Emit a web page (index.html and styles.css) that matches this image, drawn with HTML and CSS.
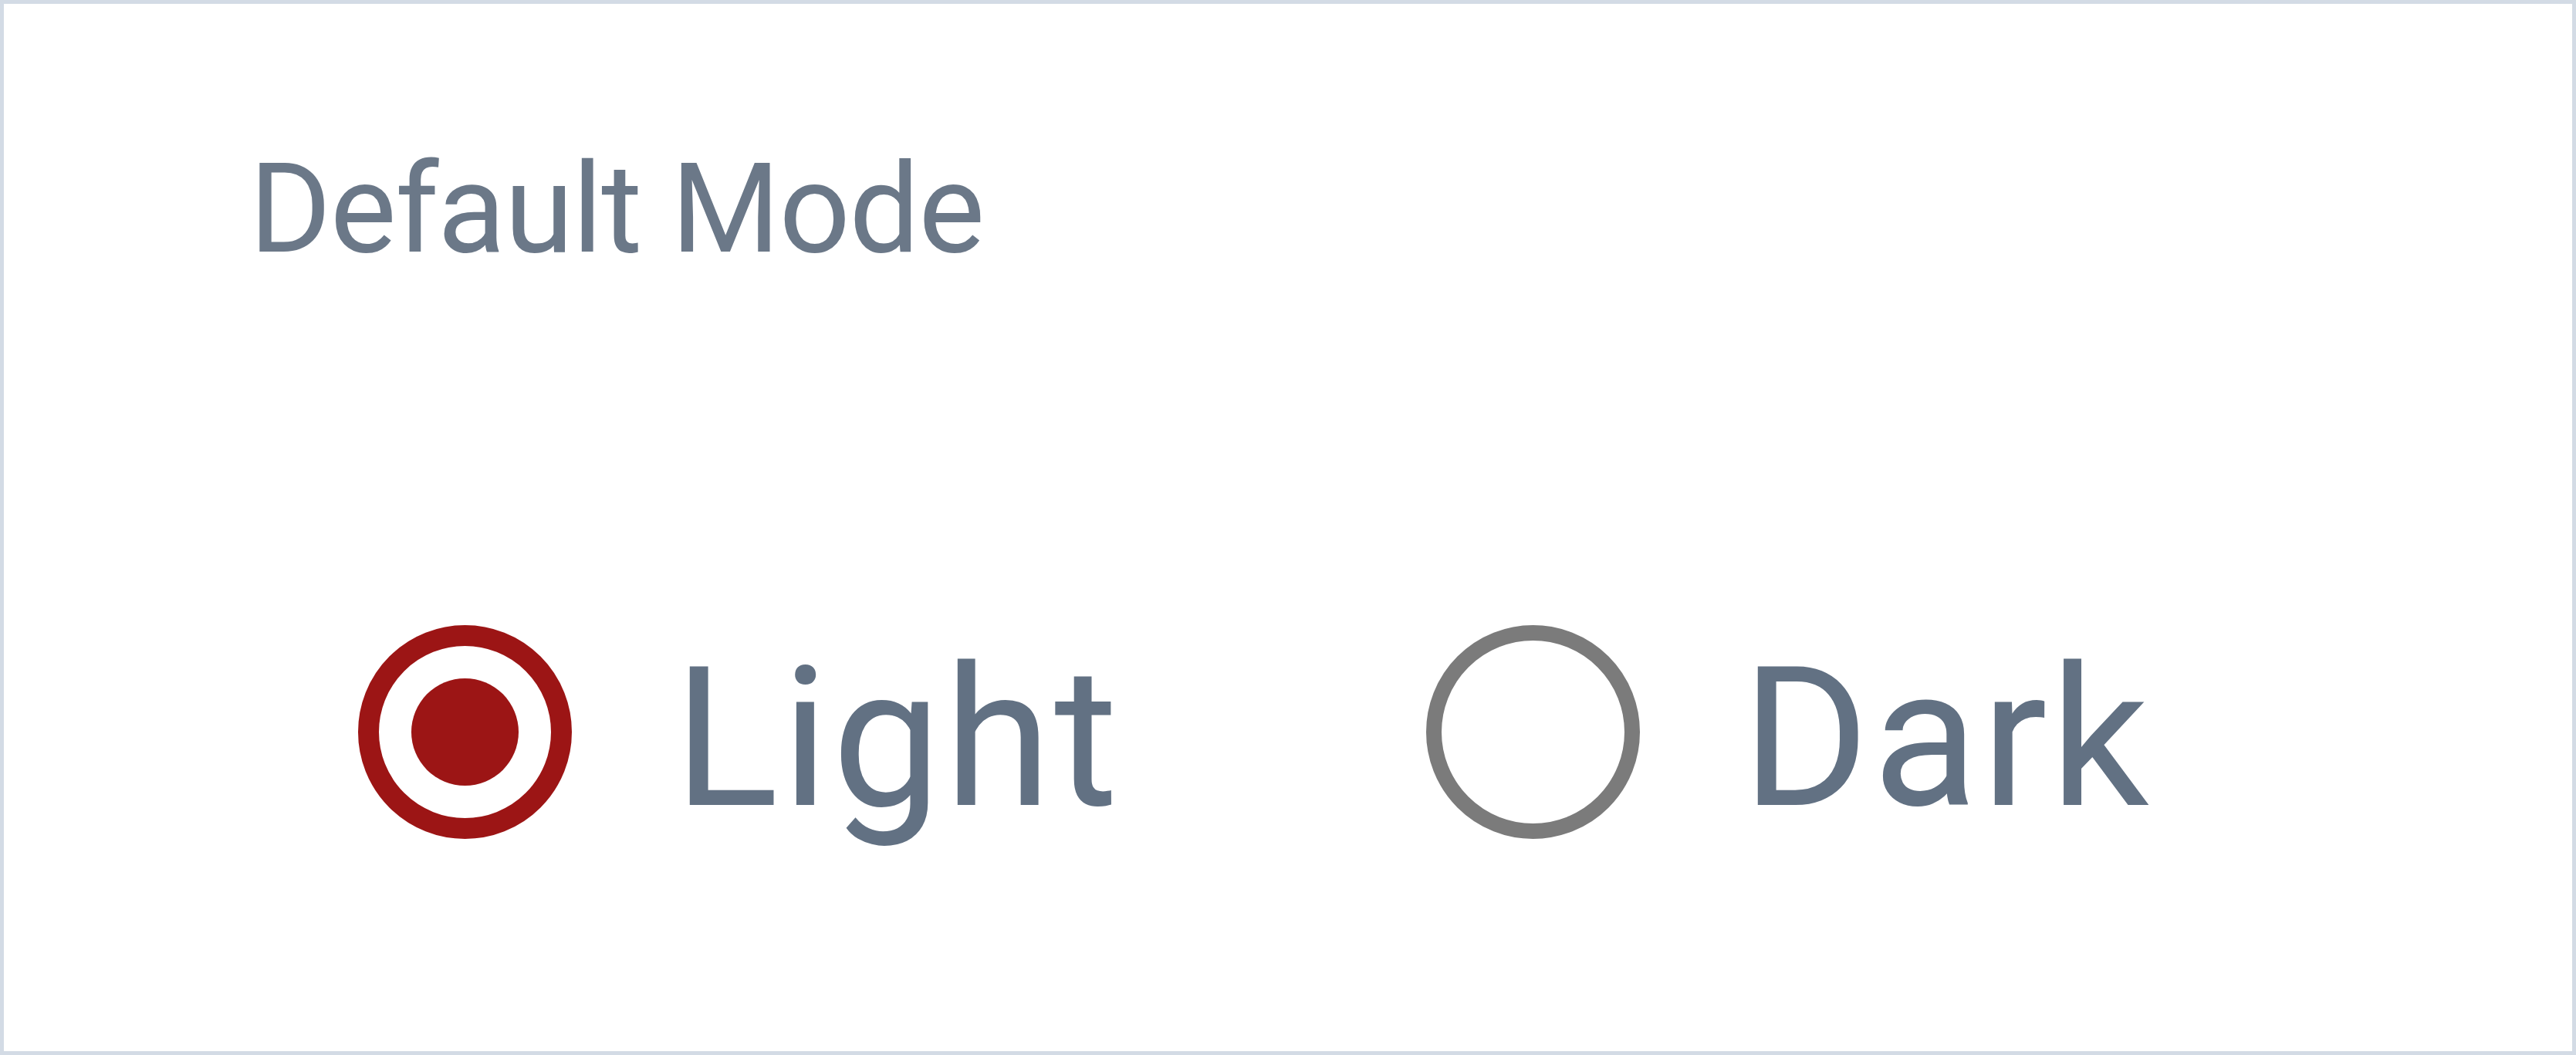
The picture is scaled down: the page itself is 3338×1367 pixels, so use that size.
FILE: index.html
```html
<!DOCTYPE html>
<html lang="en">
<head>
<meta charset="utf-8">
<title>Default Mode</title>
<link rel="stylesheet" href="styles.css">
</head>
<body>
<div class="panel">
  <div class="label">Default Mode</div>
  <div class="options">
    <label class="option option-light">
      <span class="radio radio-checked"><span class="dot"></span></span>
      <span class="option-text">Light</span>
    </label>
    <label class="option option-dark">
      <span class="radio radio-unchecked"></span>
      <span class="option-text">Dark</span>
    </label>
  </div>
</div>
</body>
</html>
```
FILE: styles.css
```css
html, body {
  margin: 0;
  padding: 0;
  background: #ffffff;
}
.panel {
  box-sizing: border-box;
  width: 3338px;
  height: 1367px;
  border: 5px solid #d3dbe5;
  background: #ffffff;
  padding: 185px 0 0 318px;
  font-family: Roboto, "Open Sans", sans-serif;
  color: #64748b;
}
.label {
  font-size: 162px;
  line-height: 1;
  height: 162px;
  color: #6b7888;
  letter-spacing: -1.5px;
}
.options {
  display: flex;
  align-items: center;
  margin-top: 458px;
  margin-left: 141px;
}
.option {
  display: flex;
  align-items: center;
}
.option-light {
  width: 1384px;
}
.radio {
  box-sizing: border-box;
  width: 277px;
  height: 277px;
  border-radius: 50%;
  display: flex;
  align-items: center;
  justify-content: center;
  flex: none;
}
.radio-checked {
  border: 27px solid #9c1515;
}
.dot {
  width: 139px;
  height: 139px;
  border-radius: 50%;
  background: #9c1515;
}
.radio-unchecked {
  border: 20px solid #7b7b7b;
}
.option-text {
  font-size: 252px;
  font-weight: 400;
  line-height: 1;
  margin-left: 132px;
  margin-top: 16px;
  letter-spacing: 4px;
  color: #627183;
}
```
